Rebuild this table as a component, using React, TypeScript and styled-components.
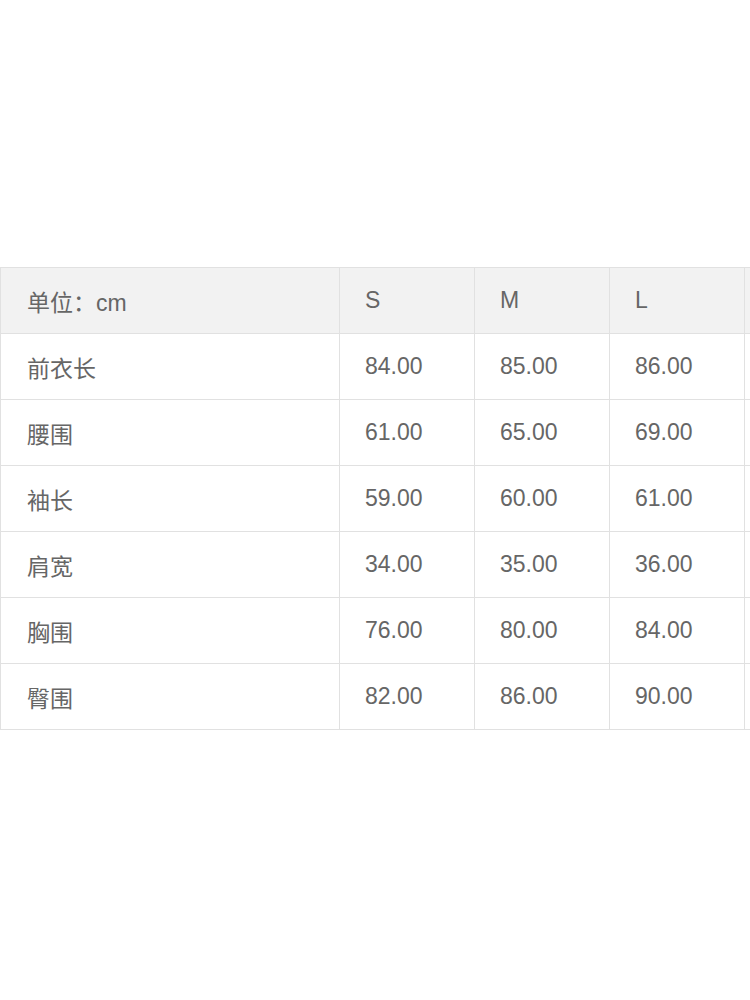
import React from "react";
import styled, { createGlobalStyle } from "styled-components";

const Global = createGlobalStyle`
  html, body {
    margin: 0;
    padding: 0;
    background: #ffffff;
    overflow: hidden;
  }
  body {
    font-family: "Liberation Sans", Arial, "Noto Sans CJK SC", sans-serif;
  }
`;

const Page = styled.div`
  width: 750px;
  height: 1000px;
  overflow: hidden;
  padding-top: 267px;
  box-sizing: border-box;
`;

const Table = styled.table`
  border-collapse: collapse;
  table-layout: fixed;
  width: 880px;
  margin-left: 0;
`;

const Cell = styled.td<{ $head?: boolean; $first?: boolean }>`
  height: 66px;
  padding: 0 0 0 ${(p) => (p.$first ? 26 : 25)}px;
  border: 1px solid #e1e1e1;
  background: ${(p) => (p.$head ? "#f2f2f2" : "#ffffff")};
  color: #666666;
  font-size: 23px;
  font-family: "Liberation Sans", Arial, "Noto Sans CJK SC", sans-serif;
  text-align: left;
  vertical-align: middle;
  white-space: nowrap;
  box-sizing: border-box;
`;

const widths = [339, 135, 135, 135, 136];

const header = ["单位：cm", "S", "M", "L", ""];
const rows: string[][] = [
  ["前衣长", "84.00", "85.00", "86.00", ""],
  ["腰围", "61.00", "65.00", "69.00", ""],
  ["袖长", "59.00", "60.00", "61.00", ""],
  ["肩宽", "34.00", "35.00", "36.00", ""],
  ["胸围", "76.00", "80.00", "84.00", ""],
  ["臀围", "82.00", "86.00", "90.00", ""],
];

export default function App() {
  return (
    <>
      <Global />
      <Page>
        <Table>
          <colgroup>
            {widths.map((w, i) => (
              <col key={i} style={{ width: w }} />
            ))}
          </colgroup>
          <tbody>
            <tr>
              {header.map((h, i) => (
                <Cell key={i} $head $first={i === 0}>
                  {h}
                </Cell>
              ))}
            </tr>
            {rows.map((r, ri) => (
              <tr key={ri}>
                {r.map((c, ci) => (
                  <Cell key={ci} $first={ci === 0}>
                    {c}
                  </Cell>
                ))}
              </tr>
            ))}
          </tbody>
        </Table>
      </Page>
    </>
  );
}
